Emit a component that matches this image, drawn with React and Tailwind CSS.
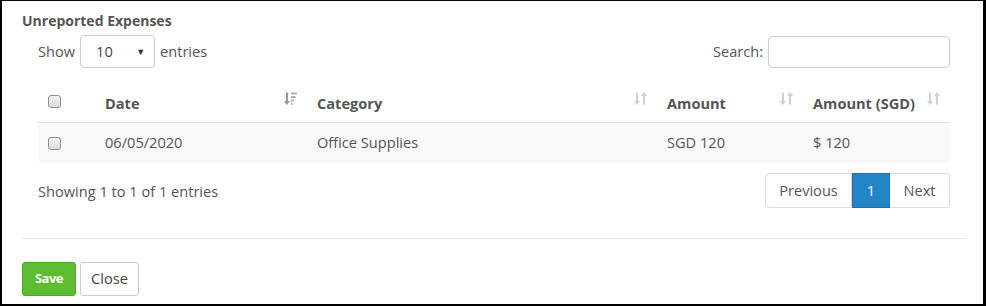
const SortBoth = () => (
    <svg width="13" height="15" viewBox="0 0 13 14" className="shrink-0">
        <g fill="#d0d0d0">
            <rect x="2" y="1" width="2" height="9" />
            <path d="M0 9.5 H6 L3 13.5 Z" />
            <rect x="9" y="4" width="2" height="9" />
            <path d="M7 4.5 H13 L10 0.5 Z" />
        </g>
    </svg>
)

const SortDesc = () => (
    <svg width="13" height="15" viewBox="0 0 13 14" className="shrink-0">
        <g fill="#999">
            <rect x="2" y="1" width="2" height="9" />
            <path d="M0 9.5 H6 L3 13.5 Z" />
        </g>
        <g fill="#b0b0b0">
            <rect x="7" y="1" width="6" height="2" />
            <rect x="7" y="4.5" width="4.5" height="2" />
            <rect x="7" y="8" width="3" height="2" />
            <rect x="7" y="11.5" width="1.5" height="2" />
        </g>
    </svg>
)

const Checkbox = () => (
    <span className="block w-[13px] h-[13px] rounded-[3px] border border-[#8f8f8f] bg-gradient-to-b from-[#f4f4f4] to-[#dcdcdc]" />
)

const columns = [
    { label: 'Date', width: 'w-[212px]', icon: 'desc' },
    { label: 'Category', width: 'w-[350px]', icon: 'both' },
    { label: 'Amount', width: 'w-[146px]', icon: 'both' },
    { label: 'Amount (SGD)', width: 'w-[147px]', icon: 'both' },
]

const row = ['06/05/2020', 'Office Supplies', 'SGD 120', '$ 120']

export default function App() {
    return (
        <div className="w-[986px] h-[306px] bg-white border-t border-l-2 border-r-[3px] border-b-2 border-black text-[14.6px] text-[#555] font-['Open_Sans',sans-serif] overflow-hidden">
            <div className="pl-[20px] pr-[17px]">
                {/* Title */}
                <div className="pt-[10px] h-[31px] font-bold text-[14px] leading-[20px] text-[#555]">Unreported Expenses</div>

                <div className="pl-[16px] pr-[16px]">
                    {/* Length + search */}
                    <div className="flex items-center justify-between h-[37px] mt-[1px]">
                        <div className="flex items-center gap-[5px]">
                            <span>Show</span>
                            <div className="w-[75px] h-[33px] border border-[#ccc] rounded-[4px] flex items-center justify-between pl-[15px] pr-[9px]">
                                <span className="text-[#444]">10</span>
                                <span className="text-[9px] text-[#333]">▼</span>
                            </div>
                            <span>entries</span>
                        </div>
                        <div className="flex items-center gap-[5px]">
                            <span>Search:</span>
                            <div className="w-[182px] h-[32px] border border-[#ccc] rounded-[4px]" />
                        </div>
                    </div>

                    {/* Table */}
                    <div className="mt-[12px]">
                        <div className="flex h-[41px] border-b border-[#ddd] font-bold">
                            <div className="w-[57px] flex items-center pl-[10px] pb-[2px]">
                                <Checkbox />
                            </div>
                            {columns.map((c) => (
                                <div key={c.label} className={`${c.width} flex items-center justify-between pl-[10px] pr-[10px]`}>
                                    <span className="pt-[4px]">{c.label}</span>
                                    <span className="-mt-[8px]">{c.icon === 'desc' ? <SortDesc /> : <SortBoth />}</span>
                                </div>
                            ))}
                        </div>
                        <div className="flex h-[40px] bg-[#f9f9f9] items-center">
                            <div className="w-[57px] pl-[10px]">
                                <Checkbox />
                            </div>
                            {row.map((v, i) => (
                                <div key={i} className={`${columns[i].width} pl-[10px]`}>{v}</div>
                            ))}
                        </div>
                    </div>

                    {/* Info + paging */}
                    <div className="flex items-center justify-between mt-[10px]">
                        <div className="leading-[20px]">Showing 1 to 1 of 1 entries</div>
                        <div className="flex h-[35px]">
                            <div className="w-[87px] flex items-center justify-center border border-[#ddd] rounded-l-[4px] text-[#555]">Previous</div>
                            <div className="w-[38px] flex items-center justify-center bg-[#2185c6] border border-[#1e70a8] text-white">1</div>
                            <div className="w-[60px] flex items-center justify-center border border-l-0 border-[#ddd] rounded-r-[4px] text-[#555]">Next</div>
                        </div>
                    </div>
                </div>

                {/* Divider */}
                <div className="mt-[30px] border-t border-[#e5e5e5]" />

                {/* Buttons */}
                <div className="flex gap-[4px] mt-[23px]">
                    <button className="h-[34px] w-[54px] rounded-[3px] bg-[#5cbd31] border border-[#4ca829] text-white font-bold text-[13px] tracking-[-0.5px]">Save</button>
                    <button className="h-[34px] w-[59px] rounded-[3px] bg-white border border-[#ccc] text-[#444] text-[14.6px]">Close</button>
                </div>
            </div>
        </div>
    )
}
